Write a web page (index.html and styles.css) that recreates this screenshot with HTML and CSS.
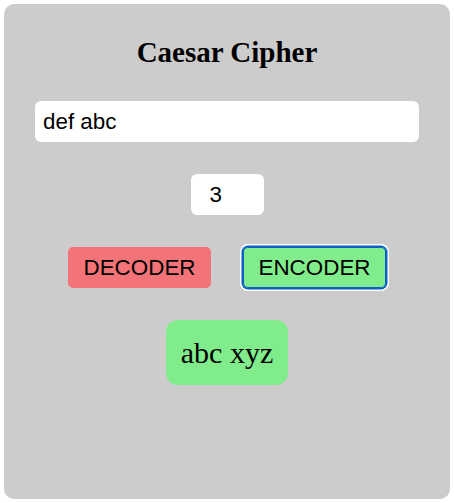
FILE: index.html
```html
<!DOCTYPE html>
<html lang="en">
<head>
<meta charset="utf-8">
<title>Caesar Cipher</title>
<link rel="stylesheet" href="styles.css">
</head>
<body>
<main class="card">
  <h1 class="title">Caesar Cipher</h1>
  <input class="text-input" type="text" value="def abc">
  <input class="shift-input" type="number" value="3">
  <div class="actions">
    <button class="btn btn-decode" type="button">DECODER</button>
    <button class="btn btn-encode is-focused" type="button">ENCODER</button>
  </div>
  <div class="result">abc xyz</div>
</main>
</body>
</html>
```

FILE: styles.css
```css
html, body {
  margin: 0;
  padding: 0;
  background: #ffffff;
}

body {
  font-family: "Liberation Serif", "Times New Roman", serif;
}

.card {
  box-sizing: border-box;
  margin: 4px;
  width: 446px;
  height: 495px;
  background: #cccccc;
  border-radius: 10px;
  padding: 32px 31px 0;
  display: flex;
  flex-direction: column;
  align-items: center;
  gap: 32px;
}

.title {
  margin: 0;
  font-size: 29px;
  font-weight: bold;
  color: #000;
  line-height: normal;
}

.text-input,
.shift-input {
  box-sizing: border-box;
  height: 41px;
  border: none;
  border-radius: 6px;
  background: #ffffff;
  font-family: "Liberation Sans", Arial, sans-serif;
  font-size: 22.4px;
  color: #000;
  margin: 0;
  outline: none;
  flex: none;
}

.text-input {
  width: 384px;
  padding: 0 8px;
}

.shift-input {
  width: 73px;
  padding: 0 0 0 19px;
  -moz-appearance: textfield;
}

.shift-input::-webkit-outer-spin-button,
.shift-input::-webkit-inner-spin-button {
  -webkit-appearance: none;
  margin: 0;
}

.actions {
  display: flex;
  gap: 32px;
  flex: none;
}

.btn {
  box-sizing: border-box;
  width: 143px;
  height: 41px;
  border: none;
  border-radius: 5px;
  padding: 0;
  margin: 0;
  font-family: "Liberation Sans", Arial, sans-serif;
  font-size: 22.4px;
  color: #000;
  cursor: pointer;
}

.btn-decode {
  background: #f27478;
}

.btn-encode {
  background: #80ec8b;
}

.btn.is-focused {
  box-shadow: inset 0 0 0 1px #0a5fc9, 0 0 0 1.5px #0a5fc9, 0 0 0 3px #ffffff;
}

.result {
  box-sizing: border-box;
  width: 122px;
  height: 65px;
  flex: none;
  border-radius: 12px;
  background: #80ec8b;
  font-size: 30px;
  display: flex;
  align-items: center;
  justify-content: center;
  color: #000;
}
```
